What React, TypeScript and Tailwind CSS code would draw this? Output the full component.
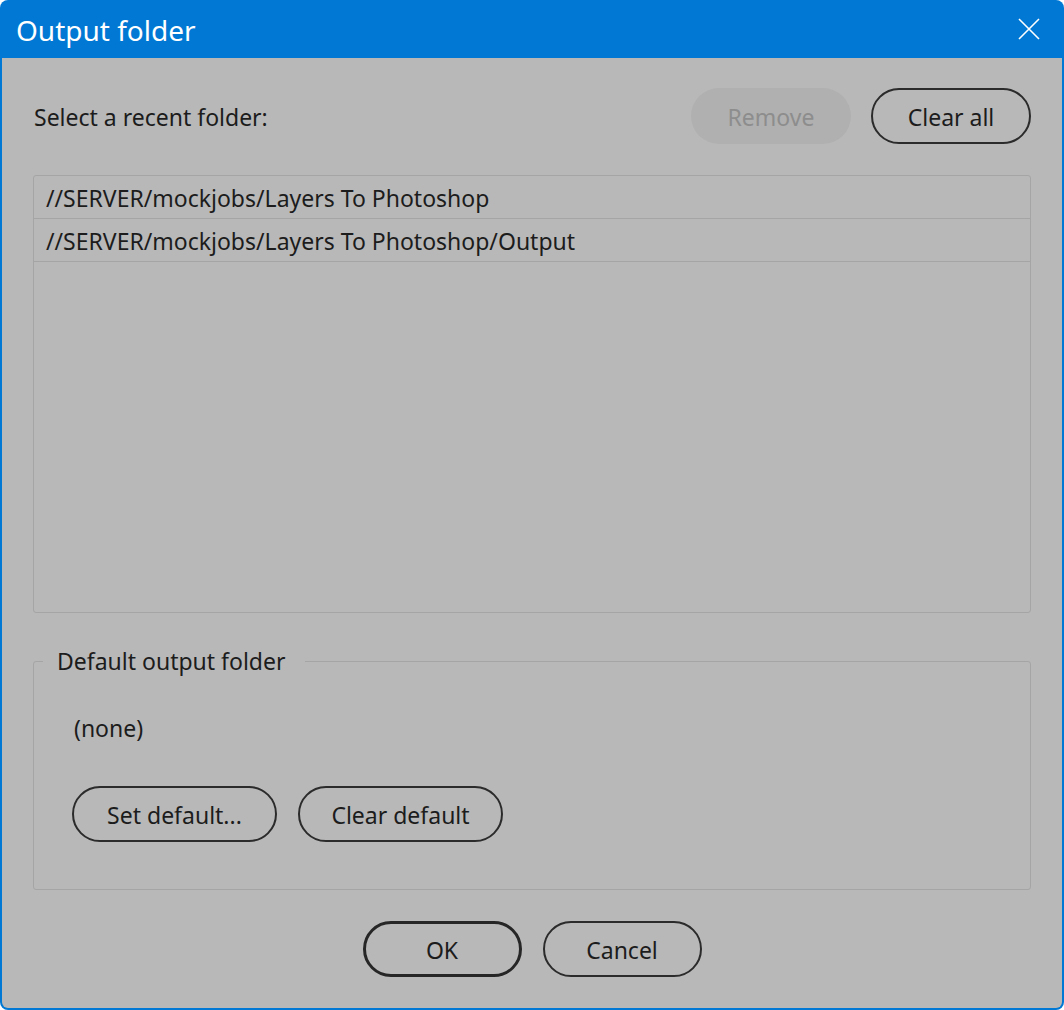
import { useState } from "react";

const FOLDERS = [
  "//SERVER/mockjobs/Layers To Photoshop",
  "//SERVER/mockjobs/Layers To Photoshop/Output",
];

const pill =
  "h-[56px] pt-[3px] rounded-full text-[23px] leading-none flex items-center justify-center";

const App = () => {
  const [selected, setSelected] = useState<number | null>(null);

  return (
    <div
      className="w-[1064px] h-[1010px] bg-[#0078d4] rounded-[8px] px-[2px] pb-[2px] flex flex-col text-[#1c1c1c]"
      style={{ fontFamily: '"Noto Sans", "Open Sans", sans-serif' }}
    >
      {/* Title bar */}
      <div className="h-[58px] flex items-center justify-between pl-[14px] pr-[22px] shrink-0">
        <span className="text-white text-[28px] leading-none pt-[2px]">Output folder</span>
        <svg width="22" height="22" viewBox="0 0 22 22" className="text-white">
          <path d="M1 1 L21 21 M21 1 L1 21" stroke="currentColor" strokeWidth="1.6" />
        </svg>
      </div>

      {/* Body */}
      <div className="flex-1 bg-[#b8b8b8] rounded-b-[6px] px-[31px] pt-[30px] flex flex-col">
        <div className="flex items-center justify-between">
          <span className="text-[23px] pt-[3px] pl-[1px]">Select a recent folder:</span>
          <div className="flex gap-[20px]">
            <button className={`${pill} w-[160px] bg-[#b0b0b0] text-[#8d8d8d]`}>Remove</button>
            <button className={`${pill} w-[160px] border-2 border-[#2b2b2b]`}>Clear all</button>
          </div>
        </div>

        {/* Recent list */}
        <div className="mt-[31px] h-[438px] border border-[#a5a5a5] rounded-[3px] flex flex-col">
          {FOLDERS.map((f, i) => (
            <div
              key={f}
              onClick={() => setSelected(i)}
              className={`h-[43px] border-b border-[#a5a5a5] pl-[12px] pt-[3px] flex items-center text-[23px] ${
                selected === i ? "bg-[#a9a9a9]" : ""
              }`}
            >
              {f}
            </div>
          ))}
        </div>

        {/* Default output folder */}
        <fieldset className="mt-[33px] border border-[#a5a5a5] rounded-[3px] pb-[47px]">
          <legend className="ml-[9px] pl-[14px] pr-[20px] text-[23px] leading-[30px]">
            Default output folder
          </legend>
          <div className="pl-[38px]">
            <div className="mt-[37px] text-[23px] leading-[30px] pl-[2px]">(none)</div>
            <div className="mt-[43px] flex gap-[21px]">
              <button className={`${pill} w-[205px] h-[54px] border-2 border-[#2b2b2b]`}>Set default...</button>
              <button className={`${pill} w-[205px] h-[54px] border-2 border-[#2b2b2b]`}>Clear default</button>
            </div>
          </div>
        </fieldset>

        <div className="mt-[31px] flex justify-center gap-[21px]">
          <button className={`${pill} w-[159px] h-[54px] border-[3px] border-[#262626]`}>OK</button>
          <button className={`${pill} w-[159px] h-[54px] border-2 border-[#2b2b2b]`}>Cancel</button>
        </div>
      </div>
    </div>
  );
};

export default App;
